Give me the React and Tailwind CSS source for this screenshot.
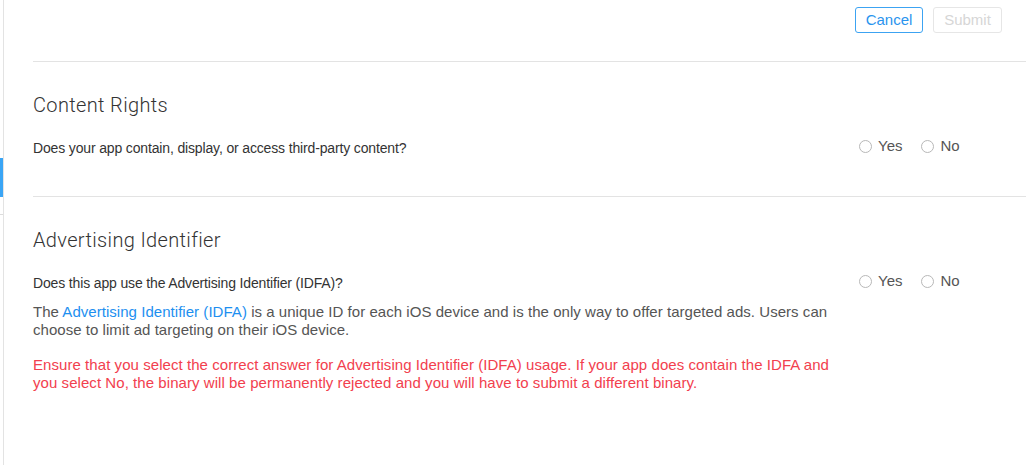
export default function App() {
	const Radio = ({ label }) => (
		<label className="flex items-center gap-[6px] text-[15px] leading-[18px] text-[#555]">
			<span className="w-[13px] h-[13px] rounded-full border border-[#b8b8b8] bg-white" />
			{label}
		</label>
	);

	const YesNo = () => (
		<div className="flex items-center gap-[19px] ml-[26px] mb-[4px]">
			<Radio label="Yes" />
			<Radio label="No" />
		</div>
	);

	const heading = 'text-[20px] leading-[24px] text-[#333] font-light tracking-[0.35px] font-["Roboto",sans-serif]';

	return (
		<div className="flex h-[465px] bg-white overflow-hidden" style={{ fontFamily: '"Liberation Sans", Arial, sans-serif' }}>
			{/* sidebar edge */}
			<div className="w-[4px] shrink-0 border-r border-[#e3e3e3] relative">
				<div className="absolute left-0 top-[158px] w-[3px] h-[39px] bg-[#3aa5f5]" />
				<div className="absolute left-0 top-[214px] w-[3px] h-px bg-[#dcdcdc]" />
			</div>

			<div className="flex-1 pl-[29px]">
				<div className="h-[62px] border-b border-[#e3e3e3] flex justify-end items-start pt-[7px] pr-[24px] gap-[10px]">
					<button className="h-[26px] w-[68px] rounded-[3px] border border-[#3ca3f2] text-[#2a94ee] text-[15px]">Cancel</button>
					<button className="h-[26px] w-[69px] rounded-[3px] border border-[#e6e6e6] text-[#d6d6d6] text-[15px]">Submit</button>
				</div>

				<section className="border-b border-[#e3e3e3] pt-[31px] pb-[37px]">
					<h2 className={heading}>Content Rights</h2>
					<div className="flex items-center mt-[20px]">
						<p className="w-[800px] text-[14px] leading-[20px] text-[#333] tracking-[-0.15px]">Does your app contain, display, or access third-party content?</p>
						<YesNo />
					</div>
				</section>

				<section className="pt-[31px]">
					<h2 className={heading}>Advertising Identifier</h2>
					<div className="flex items-start mt-[21px]">
						<div className="w-[800px]">
							<p className="text-[14px] leading-[20px] text-[#333] tracking-[-0.15px]">Does this app use the Advertising Identifier (IDFA)?</p>
							<p className="mt-[10px] text-[15px] leading-[18px] text-[#555] tracking-[0.04px]">
								The <span className="text-[#1d8ff0]">Advertising Identifier (IDFA)</span> is a unique ID for each iOS device and is the only way to offer targeted ads. Users can choose to limit ad targeting on their iOS device.
							</p>
							<p className="mt-[17px] text-[15px] leading-[18px] text-[#f2404e] tracking-[0.06px]">
								Ensure that you select the correct answer for Advertising Identifier (IDFA) usage. If your app does contain the IDFA and you select No, the binary will be permanently rejected and you will have to submit a different binary.
							</p>
						</div>
						<div className="h-[20px] flex items-center">
							<YesNo />
						</div>
					</div>
				</section>
			</div>
		</div>
	);
}
